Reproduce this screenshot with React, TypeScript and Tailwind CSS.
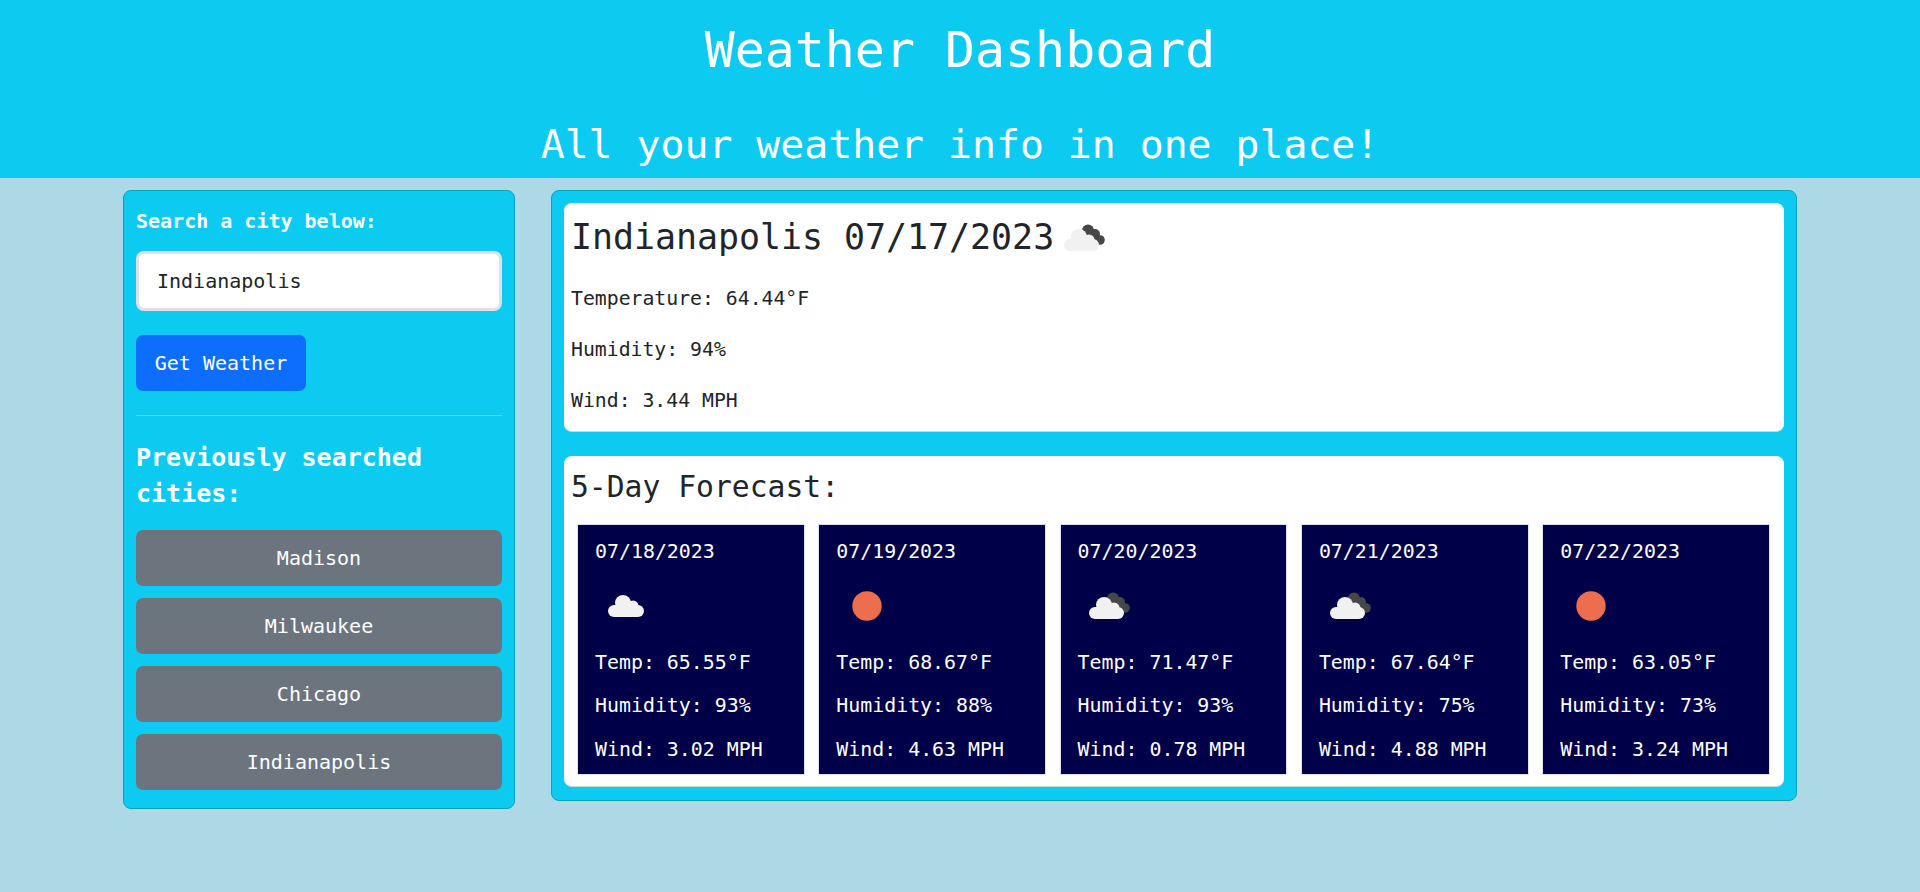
const mono = "font-['DejaVu_Sans_Mono','Liberation_Mono',monospace]";

type Kind = "few" | "clouds" | "sun";

const forecast: { date: string; kind: Kind; temp: string; humidity: string; wind: string }[] = [
	{ date: "07/18/2023", kind: "few", temp: "65.55", humidity: "93", wind: "3.02" },
	{ date: "07/19/2023", kind: "sun", temp: "68.67", humidity: "88", wind: "4.63" },
	{ date: "07/20/2023", kind: "clouds", temp: "71.47", humidity: "93", wind: "0.78" },
	{ date: "07/21/2023", kind: "clouds", temp: "67.64", humidity: "75", wind: "4.88" },
	{ date: "07/22/2023", kind: "sun", temp: "63.05", humidity: "73", wind: "3.24" },
];

const cities = ["Madison", "Milwaukee", "Chicago", "Indianapolis"];

const WeatherIcon = ({ kind, className }: { kind: Kind; className?: string }) => (
	<svg viewBox="0 0 60 60" className={className}>
		{kind === "sun" && <circle cx="30" cy="30" r="14.7" fill="#ed6e4e" />}
		{kind === "few" && (
			<g fill="#f1f1f1">
				<circle cx="27" cy="27" r="8" />
				<circle cx="37" cy="30" r="5.5" />
				<rect x="12" y="29" width="36" height="12" rx="6" />
			</g>
		)}
		{kind === "clouds" && (
			<>
				<g fill="#474747">
					<circle cx="34" cy="22.5" r="6" />
					<circle cx="41" cy="26" r="5" />
					<circle cx="46" cy="32" r="4.8" />
					<rect x="33" y="22" width="10" height="12" />
				</g>
				<g fill="#f1f1f1">
					<circle cx="25" cy="29" r="8" />
					<circle cx="35" cy="32" r="5.5" />
					<rect x="10" y="31" width="35" height="12" rx="6" />
				</g>
			</>
		)}
	</svg>
);

export default function App() {
	return (
		<div className={`min-h-[892px] bg-[#add8e6] ${mono}`}>
			<header className="h-[178px] bg-[#0dcaf0] pt-[20px] text-center text-white">
				<h1 className="text-[49.9px] leading-[60px]">Weather Dashboard</h1>
				<h2 className="mt-[40px] text-[39.8px] leading-[48px]">All your weather info in one place!</h2>
			</header>

			<main className="flex items-start gap-[36px] pt-[12px] pl-[123px]">
				{/* Search column */}
				<aside className="h-[619px] w-[392px] rounded-[8px] border border-[#0aa2c0] bg-[#0dcaf0] p-[12px] text-white">
					<p className="mt-[3px] text-[20px] leading-[30px] font-bold">Search a city below:</p>
					<input
						readOnly
						value="Indianapolis"
						className={`mt-[15px] block h-[60px] w-full rounded-[8px] border-[3px] border-[#dee2e6] bg-white px-[18px] text-[20px] text-[#212529] outline-none ${mono}`}
					/>
					<button className="mt-[24px] block h-[56px] w-[170px] rounded-[7px] bg-[#0d6efd] text-[20px] text-white">
						Get Weather
					</button>
					<hr className="mt-[24px] border-t border-[#4dd9f5]" />
					<h3 className="mt-[24px] text-[25px] leading-[36px] font-bold">Previously searched cities:</h3>
					<div className="mt-[18px] flex flex-col gap-[12px]">
						{cities.map((city) => (
							<button key={city} className="h-[56px] w-full rounded-[7px] bg-[#6c757d] text-[20px] text-white">
								{city}
							</button>
						))}
					</div>
				</aside>

				{/* Weather column */}
				<section className="h-[611px] w-[1246px] rounded-[8px] border border-[#0aa2c0] bg-[#0dcaf0] p-[12px]">
					<div className="h-[229px] rounded-[8px] border-b border-[#cfd4d8] bg-white px-[7px] pt-[4px] text-[#212529]">
						<div className="flex h-[60px] items-center">
							<h2 className="text-[34.9px] leading-[42px]">Indianapolis 07/17/2023</h2>
							<WeatherIcon kind="clouds" className="mt-[2px] h-[60px] w-[60px]" />
						</div>
						<div className="mt-[16.5px] flex flex-col gap-[21px] text-[19.8px] leading-[30px]">
							<p>Temperature: 64.44°F</p>
							<p>Humidity: 94%</p>
							<p>Wind: 3.44 MPH</p>
						</div>
					</div>

					<div className="mt-[24px] h-[331px] rounded-[8px] border-b border-[#cfd4d8] bg-white pt-[13px] pr-[7px] pl-[7px] text-[#212529]">
						<h3 className="text-[29.7px] leading-[36px]">5-Day Forecast:</h3>
						<div className="mt-[19px] flex gap-[13.5px] pr-[7px] pl-[6px]">
							{forecast.map((day) => (
								<div
									key={day.date}
									className="h-[251px] w-[229px] border border-[#dee2e6] bg-[#000048] px-[17px] pt-[12px] text-[19.9px] leading-[30px] text-white"
								>
									<p>{day.date}</p>
									<WeatherIcon kind={day.kind} className="mt-[9px] ml-[1px] h-[60px] w-[60px]" />
									<p className="mt-[12px]">Temp: {day.temp}°F</p>
									<p className="mt-[13px]">Humidity: {day.humidity}%</p>
									<p className="mt-[13.5px]">Wind: {day.wind} MPH</p>
								</div>
							))}
						</div>
					</div>
				</section>
			</main>
		</div>
	);
}
